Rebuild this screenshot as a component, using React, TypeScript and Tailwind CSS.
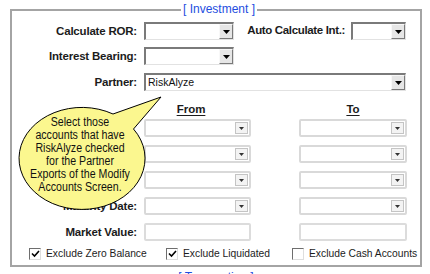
import React from 'react'

const font = "font-['Liberation_Sans',Arial,sans-serif]"

function Arrow({ small }: { small?: boolean }) {
  return small ? (
    <svg width="5" height="3" viewBox="0 0 5 3"><path d="M0 0h5L2.5 3z" fill="#333" /></svg>
  ) : (
    <svg width="7" height="4" viewBox="0 0 7 4"><path d="M0 0h7L3.5 4z" fill="#000" /></svg>
  )
}

// old style sunken combo (top rows)
function Combo({ w, text }: { w: string; text?: string }) {
  return (
    <div className={`${w} h-[18px] flex bg-white border-t-2 border-l-2 border-t-[#7a7a7a] border-l-[#7a7a7a] border-b border-r border-b-[#e2e2e2] border-r-[#e2e2e2]`}>
      <div className="flex-1 pl-[2px] text-[10.5px] leading-[15px] text-[#111]">{text}</div>
      <div className="w-[14px] flex items-center justify-center bg-[#e6e6e6] border-l border-t border-l-[#f8f8f8] border-t-[#f8f8f8] border-r border-b border-r-[#7a7a7a] border-b-[#7a7a7a]">
        <Arrow />
      </div>
    </div>
  )
}

// lighter combo (from / to)
function LightCombo({ w }: { w: string }) {
  return (
    <div className={`${w} h-[18px] flex bg-white border-2 border-[#d9d9d9] rounded-[2px]`}>
      <div className="flex-1" />
      <div className="w-[13px] my-[1px] mr-[1px] flex items-center justify-center bg-[#f3f3f3] border border-[#c4c4c4]">
        <Arrow small />
      </div>
    </div>
  )
}

function TextBox({ w }: { w: string }) {
  return <div className={`${w} h-[18px] bg-white border-2 border-[#dcdcdc] rounded-[2px]`} />
}

function Label({ children }: { children?: React.ReactNode }) {
  return (
    <div className="w-[125px] h-[18px] shrink-0 text-right font-bold text-[11.5px] tracking-[-0.2px] text-[#1c1c1c] leading-[18px]">
      {children}
    </div>
  )
}

function Check({ checked, label, w }: { checked?: boolean; label: string; w: string }) {
  return (
    <div className={`${w} flex items-center gap-[5px]`}>
      <div className="w-[12px] h-[12px] bg-white border-t border-l border-t-[#6e6e6e] border-l-[#6e6e6e] border-b border-r border-b-[#dedede] border-r-[#dedede] flex items-center justify-center">
        {checked && (
          <svg width="9" height="8" viewBox="0 0 9 8">
            <path d="M1 3.5l2.5 2.5L8 1" stroke="#000" strokeWidth="1.6" fill="none" />
          </svg>
        )}
      </div>
      <span className="text-[10.3px] text-[#1c1c1c] leading-[12px]">{label}</span>
    </div>
  )
}

export default function App() {
  // first three labels sit fully under the callout, so they show nothing
  const rows = ['', '', '', 'Maturity Date:']
  return (
    <div className={`relative w-[430px] h-[274px] bg-white overflow-hidden ${font}`}>
      <div className="pt-[9px] pl-[10px]">
        <div className="relative w-[412px] h-[258px] border-2 border-[#a4a4a4]">
          <span className="absolute -top-[9px] left-[169px] px-[2px] bg-white text-[12px] leading-[14px] text-[#1e4de0]">
            [ Investment ]
          </span>

          <div className="flex flex-col pt-[11px]">
            <div className="flex items-center gap-[7px] pr-[14px]">
              <Label>Calculate ROR:</Label>
              <Combo w="w-[90px]" />
              <div className="ml-auto flex items-center gap-[6px]">
                <span className="font-bold text-[11.5px] tracking-[-0.35px] text-[#1c1c1c]">Auto Calculate Int.:</span>
                <Combo w="w-[55px]" />
              </div>
            </div>
            <div className="flex items-center gap-[7px] mt-[7px]">
              <Label>Interest Bearing:</Label>
              <Combo w="w-[90px]" />
            </div>
            <div className="flex items-center gap-[7px] mt-[8px]">
              <Label>Partner:</Label>
              <Combo w="w-[262px]" text="RiskAlyze" />
            </div>

            <div className="flex mt-[11px] h-[14px] font-bold text-[11.5px] text-[#1c1c1c] leading-[14px]">
              <div className="w-[132px]" />
              <div className="w-[94px] text-center"><span className="underline underline-offset-[2px]">From</span></div>
              <div className="w-[61px]" />
              <div className="w-[108px] text-center"><span className="underline underline-offset-[2px]">To</span></div>
            </div>

            <div className="flex flex-col gap-[8px] mt-[3px]">
              {rows.map((r, i) => (
                <div key={i} className="flex items-center gap-[7px]">
                  <Label>{r}</Label>
                  <LightCombo w="w-[107px]" />
                  <div className="w-[34px]" />
                  <LightCombo w="w-[108px]" />
                </div>
              ))}
              <div className="flex items-center gap-[7px]">
                <Label>Market Value:</Label>
                <TextBox w="w-[107px]" />
                <div className="w-[34px]" />
                <TextBox w="w-[108px]" />
              </div>
            </div>

            <div className="flex items-center mt-[7px] pl-[17px]">
              <Check checked label="Exclude Zero Balance" w="w-[137px]" />
              <Check checked label="Exclude Liquidated" w="w-[126px]" />
              <Check label="Exclude Cash Accounts" w="w-[128px]" />
            </div>
          </div>
        </div>
        <div className="w-[412px] text-center text-[12px] leading-[14px] text-[#1e4de0] mt-[3px]">[ Transaction ]</div>
      </div>

      {/* callout bubble */}
      <svg className="absolute left-0 top-0 pointer-events-none" width="430" height="274" viewBox="0 0 430 274">
        <path
          d="M113 114 L161 97 L133.5 129 A63 51 0 1 1 113 114 Z"
          fill="#fbf78f"
          stroke="#000"
          strokeWidth="1"
        />
      </svg>
      <div className="absolute left-[5px] top-[116px] w-[150px] text-center text-[12.5px] leading-[13px] text-[#111] scale-x-[0.85] origin-center pointer-events-none">
        Select those<br />accounts that have<br />RiskAlyze checked<br />for the Partner<br />Exports of the Modify<br />Accounts Screen.
      </div>
    </div>
  )
}
